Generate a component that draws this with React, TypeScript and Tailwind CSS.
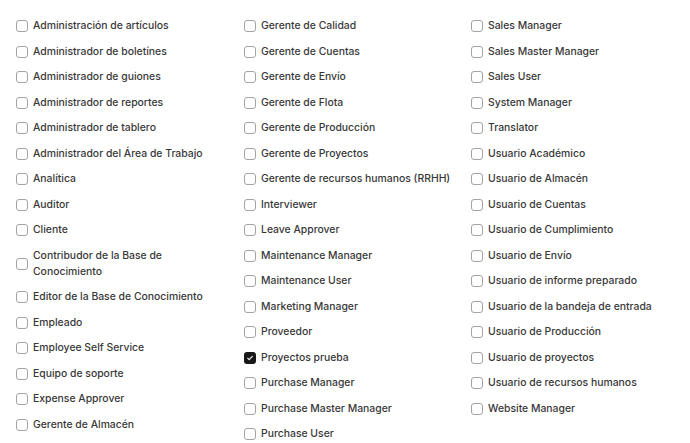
const columns: string[][] = [
  [
    "Administración de artículos",
    "Administrador de boletínes",
    "Administrador de guiones",
    "Administrador de reportes",
    "Administrador de tablero",
    "Administrador del Área de Trabajo",
    "Analítica",
    "Auditor",
    "Cliente",
    "Contribudor de la Base de Conocimiento",
    "Editor de la Base de Conocimiento",
    "Empleado",
    "Employee Self Service",
    "Equipo de soporte",
    "Expense Approver",
    "Gerente de Almacén",
  ],
  [
    "Gerente de Calidad",
    "Gerente de Cuentas",
    "Gerente de Envío",
    "Gerente de Flota",
    "Gerente de Producción",
    "Gerente de Proyectos",
    "Gerente de recursos humanos (RRHH)",
    "Interviewer",
    "Leave Approver",
    "Maintenance Manager",
    "Maintenance User",
    "Marketing Manager",
    "Proveedor",
    "Proyectos prueba",
    "Purchase Manager",
    "Purchase Master Manager",
    "Purchase User",
  ],
  [
    "Sales Manager",
    "Sales Master Manager",
    "Sales User",
    "System Manager",
    "Translator",
    "Usuario Académico",
    "Usuario de Almacén",
    "Usuario de Cuentas",
    "Usuario de Cumplimiento",
    "Usuario de Envío",
    "Usuario de informe preparado",
    "Usuario de la bandeja de entrada",
    "Usuario de Producción",
    "Usuario de proyectos",
    "Usuario de recursos humanos",
    "Website Manager",
  ],
];

const checked = new Set(["Proyectos prueba"]);

function Check({ on }: { on: boolean }) {
  if (on) {
    return (
      <span className="flex h-3 w-3 shrink-0 items-center justify-center rounded-[3px] bg-[#171717]">
        <svg viewBox="0 0 12 12" className="h-2 w-2" fill="none">
          <path d="M2.5 6.3 4.8 8.5 9.5 3.5" stroke="white" strokeWidth="1.6" strokeLinecap="round" strokeLinejoin="round" />
        </svg>
      </span>
    );
  }
  return <span className="h-3 w-3 shrink-0 rounded-[3px] border border-[#a3a3a3] bg-white" />;
}

export default function App() {
  return (
    <div
      className="h-[443px] w-[690px] overflow-hidden bg-white pl-4 pt-[18px] text-[10.4px] font-medium leading-4 text-[#383838]"
      style={{ fontFamily: "Inter, 'Noto Sans', sans-serif" }}
    >
      <div className="grid grid-cols-[212px_211px_1fr] gap-x-4">
        {columns.map((col, i) => (
          <div key={i} className="flex flex-col gap-y-[9.5px]">
            {col.map((label) => (
              <label key={label} className="flex items-center gap-[5px]">
                <Check on={checked.has(label)} />
                <span className="max-w-[192px]">{label}</span>
              </label>
            ))}
          </div>
        ))}
      </div>
    </div>
  );
}
